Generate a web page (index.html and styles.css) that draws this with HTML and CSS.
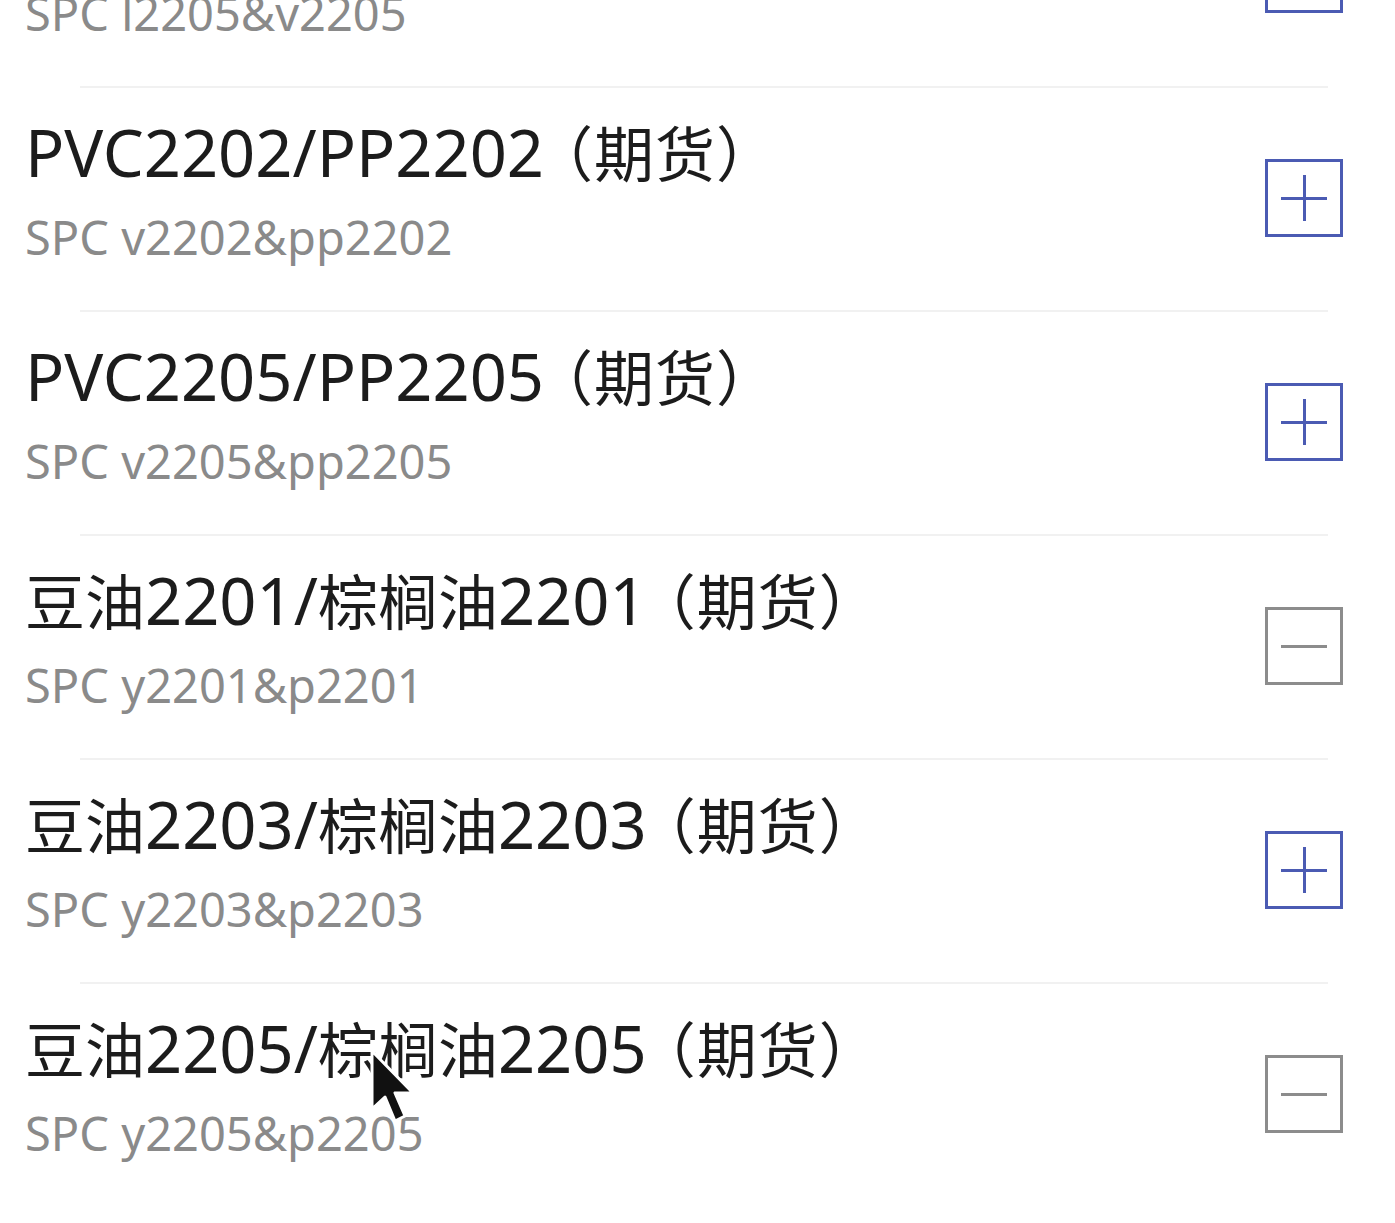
FILE: index.html
```html
<!DOCTYPE html>
<html lang="zh-CN">
<head>
<meta charset="utf-8">
<link rel="stylesheet" href="styles.css">
</head>
<body>
<div class="screen">
  <ul class="list">
    <li class="row">
      <div class="text">
        <div class="title"><span class="cn">塑料</span>2205/PVC2205<span class="tag">（期货）</span></div>
        <div class="sub">SPC l2205&amp;v2205</div>
      </div>
      <span class="box plus"></span>
    </li>
    <li class="row">
      <div class="text">
        <div class="title">PVC2202/PP2202<span class="tag">（期货）</span></div>
        <div class="sub">SPC v2202&amp;pp2202</div>
      </div>
      <span class="box plus"></span>
    </li>
    <li class="row">
      <div class="text">
        <div class="title">PVC2205/PP2205<span class="tag">（期货）</span></div>
        <div class="sub">SPC v2205&amp;pp2205</div>
      </div>
      <span class="box plus"></span>
    </li>
    <li class="row">
      <div class="text">
        <div class="title"><span class="cn">豆油</span>2201/<span class="cn">棕榈油</span>2201<span class="tag">（期货）</span></div>
        <div class="sub">SPC y2201&amp;p2201</div>
      </div>
      <span class="box minus"></span>
    </li>
    <li class="row">
      <div class="text">
        <div class="title"><span class="cn">豆油</span>2203/<span class="cn">棕榈油</span>2203<span class="tag">（期货）</span></div>
        <div class="sub">SPC y2203&amp;p2203</div>
      </div>
      <span class="box plus"></span>
    </li>
    <li class="row">
      <div class="text">
        <div class="title"><span class="cn">豆油</span>2205/<span class="cn">棕榈油</span>2205<span class="tag">（期货）</span></div>
        <div class="sub">SPC y2205&amp;p2205</div>
      </div>
      <span class="box minus"></span>
    </li>
  </ul>
  <svg class="cursor" width="50" height="76" viewBox="0 0 50 76">
    <path d="M3 2 L3 60 L16 48 L26 72 L36 67 L26 44 L44 44 Z" fill="#111" stroke="#fff" stroke-width="3" stroke-linejoin="round"/>
  </svg>
</div>
</body>
</html>
```
FILE: styles.css
```css
html, body {
  margin: 0;
  padding: 0;
  background: #ffffff;
}
.screen {
  position: relative;
  width: 1395px;
  height: 1223px;
  overflow: hidden;
  font-family: "Noto Sans", "Noto Sans CJK SC", sans-serif;
}
.list {
  list-style: none;
  margin: -138px 0 0 0;
  padding: 0;
}
.row {
  position: relative;
  height: 224px;
  box-sizing: border-box;
  display: flex;
  align-items: center;
  justify-content: space-between;
  padding: 0 52px 0 25px;
}
.row + .row::before {
  content: "";
  position: absolute;
  top: 0;
  left: 80px;
  right: 67px;
  height: 2px;
  background: #f1f1f1;
}
.text {
  align-self: flex-start;
  padding-top: 25px;
  display: flex;
  flex-direction: column;
}
.title {
  font-size: 65px;
  line-height: 80px;
  color: #1c1c1c;
  white-space: nowrap;
}
.cn {
  font-family: "Noto Sans CJK SC", sans-serif;
  font-size: 60px;
}
.tag {
  font-family: "Noto Sans CJK SC", sans-serif;
  font-size: 60px;
  margin-left: 19px;
  letter-spacing: 1px;
  font-feature-settings: "halt";
}
.sub {
  margin-top: 15px;
  font-size: 47px;
  line-height: 60px;
  color: #8a8a8a;
  white-space: nowrap;
}
.box {
  position: relative;
  width: 78px;
  height: 78px;
  box-sizing: border-box;
  border: 3px solid #4b5bb3;
}
.box::before,
.box::after {
  content: "";
  position: absolute;
  background: #4b5bb3;
}
.box::before {
  left: 13px;
  right: 13px;
  top: 35px;
  height: 3px;
}
.box.plus::after {
  top: 13px;
  bottom: 13px;
  left: 35px;
  width: 3px;
}
.box.minus {
  border-color: #8c8c8c;
}
.box.minus::before {
  background: #8c8c8c;
}
.box.minus::after {
  display: none;
}
.cursor {
  position: absolute;
  left: 369px;
  top: 1049px;
}
```
